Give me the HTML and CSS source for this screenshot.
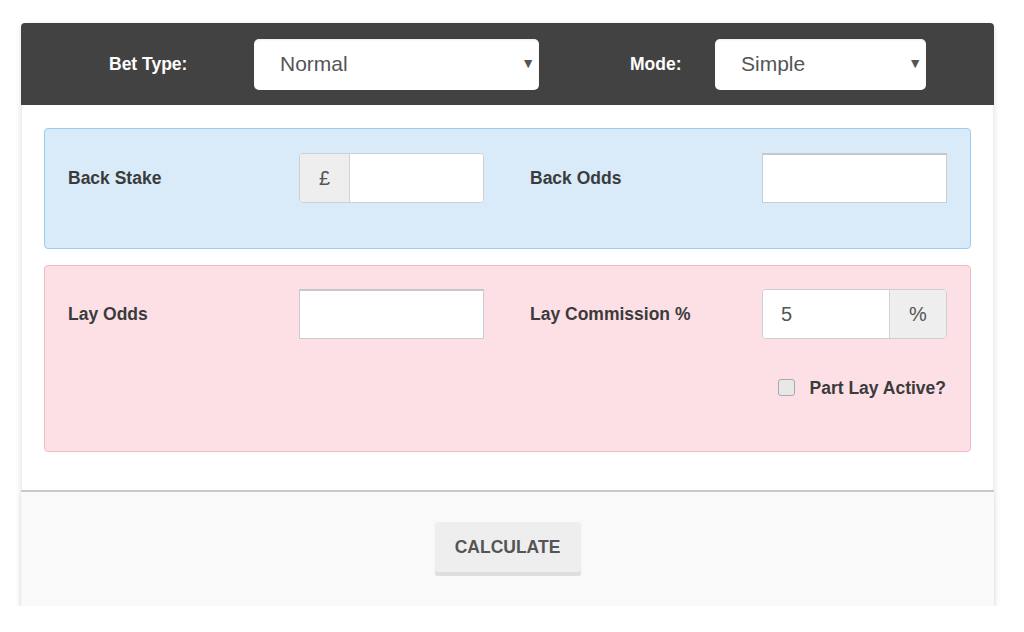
FILE: index.html
```html
<!DOCTYPE html>
<html>
<head>
<meta charset="utf-8">
<link rel="stylesheet" href="styles.css">
</head>
<body>
<div class="card">
  <div class="header">
    <label class="hlabel hl1">Bet Type:</label>
    <div class="sel sel1"><span>Normal</span><i class="arrow">▼</i></div>
    <label class="hlabel hl2">Mode:</label>
    <div class="sel sel2"><span>Simple</span><i class="arrow">▼</i></div>
  </div>
  <div class="body">
    <div class="panel blue">
      <div class="grid">
        <div class="lbl">Back Stake</div>
        <div class="igroup"><span class="addon addon-l">£</span><span class="field"></span></div>
        <div></div>
        <div class="lbl">Back Odds</div>
        <div class="plain"></div>
      </div>
    </div>
    <div class="panel pink">
      <div class="grid">
        <div class="lbl">Lay Odds</div>
        <div class="plain"></div>
        <div></div>
        <div class="lbl">Lay Commission %</div>
        <div class="igroup"><span class="field val">5</span><span class="addon addon-r">%</span></div>
      </div>
      <div class="checkrow">
        <span class="cbox"></span>
        <span class="clabel">Part Lay Active?</span>
      </div>
    </div>
  </div>
  <div class="footer">
    <button class="btn">CALCULATE</button>
  </div>
</div>
</body>
</html>
```
FILE: styles.css
```css
html, body {
  margin: 0;
  padding: 0;
  background: #ffffff;
  font-family: "Liberation Sans", Arial, sans-serif;
}
.card {
  margin: 23px 0 0 21px;
  width: 973px;
  box-shadow: 0 2px 6px rgba(0,0,0,0.12);
  border-radius: 4px 4px 0 0;
}
.header {
  background: #424242;
  height: 82px;
  border-radius: 4px 4px 0 0;
  display: flex;
  align-items: center;
  padding-left: 88px;
  box-sizing: border-box;
}
.hlabel {
  color: #ffffff;
  font-weight: bold;
  font-size: 17.5px;
}
.hl1 { width: 145px; }
.hl2 { width: 85px; margin-left: 91px; }
.sel {
  position: relative;
  height: 51px;
  background: #ffffff;
  border-radius: 5px;
  box-sizing: border-box;
  display: flex;
  align-items: center;
  padding-left: 26px;
  color: #555555;
  font-size: 21px;
  box-shadow: inset 0 1px 2px rgba(0,0,0,0.08);
}
.sel1 { width: 285px; }
.sel2 { width: 211px; }
.arrow {
  position: absolute;
  right: 4px;
  top: 15px;
  font-style: normal;
  font-size: 14px;
  line-height: 18px;
  color: #555555;
}
.body {
  background: #ffffff;
  padding: 23px 22px 38px 22px;
  border-left: 1px solid #eeeeee;
  border-right: 1px solid #eeeeee;
}
.panel {
  border-radius: 4px;
  border: 1px solid;
  padding: 24px 23px 45px 23px;
}
.blue {
  background: #d9ebf9;
  border-color: #9dcdee;
}
.pink {
  background: #fde0e6;
  border-color: #f4b8c4;
  margin-top: 16px;
  padding-top: 23px;
  padding-bottom: 51px;
}
.grid {
  display: grid;
  grid-template-columns: 231px 185px 46px 232px 185px;
  align-items: center;
}
.lbl {
  font-weight: bold;
  font-size: 17.5px;
  color: #3b3b3b;
}
.igroup {
  display: flex;
  height: 50px;
  border: 1px solid #cfcfcf;
  border-radius: 4px;
  box-sizing: border-box;
  overflow: hidden;
  background: #ffffff;
}
.addon {
  background: #eeeeee;
  color: #555555;
  font-size: 20px;
  display: flex;
  align-items: center;
  justify-content: center;
}
.addon-l { width: 49px; border-right: 1px solid #d2d2d2; }
.addon-r { width: 56px; border-left: 1px solid #d2d2d2; }
.field {
  flex: 1;
  background: #ffffff;
  display: flex;
  align-items: center;
  font-size: 20px;
  color: #555555;
}
.val { padding-left: 18px; }
.plain {
  height: 50px;
  background: #ffffff;
  border: 1px solid #cccccc;
  border-top: 2px solid #c8c8c8;
  box-sizing: border-box;
}
.checkrow {
  margin-top: 37px;
  height: 24px;
  display: flex;
  justify-content: flex-end;
  align-items: center;
  padding-right: 1px;
}
.cbox {
  width: 15px;
  height: 15px;
  border: 1px solid #a9a9a9;
  border-radius: 3px;
  background: #e8e8e8;
  margin-right: 15px;
  margin-top: -2px;
}
.clabel {
  font-weight: bold;
  font-size: 17.5px;
  color: #3b3b3b;
}
.footer {
  background: #f9f9f9;
  border-top: 2px solid #c9c9c9;
  padding: 30px 0 30px 0;
  display: flex;
  justify-content: center;
  box-shadow: 0 5px 4px rgba(0,0,0,0.09);
}
.btn {
  width: 146px;
  height: 50px;
  margin-bottom: 4px;
  border: none;
  border-radius: 3px;
  background: #efeeef;
  box-shadow: 0 4px 0 #dedede, 0 1px 2px rgba(0,0,0,0.05);
  font-family: "Liberation Sans", Arial, sans-serif;
  font-weight: bold;
  font-size: 17.5px;
  color: #555555;
  padding: 0;
}
```
